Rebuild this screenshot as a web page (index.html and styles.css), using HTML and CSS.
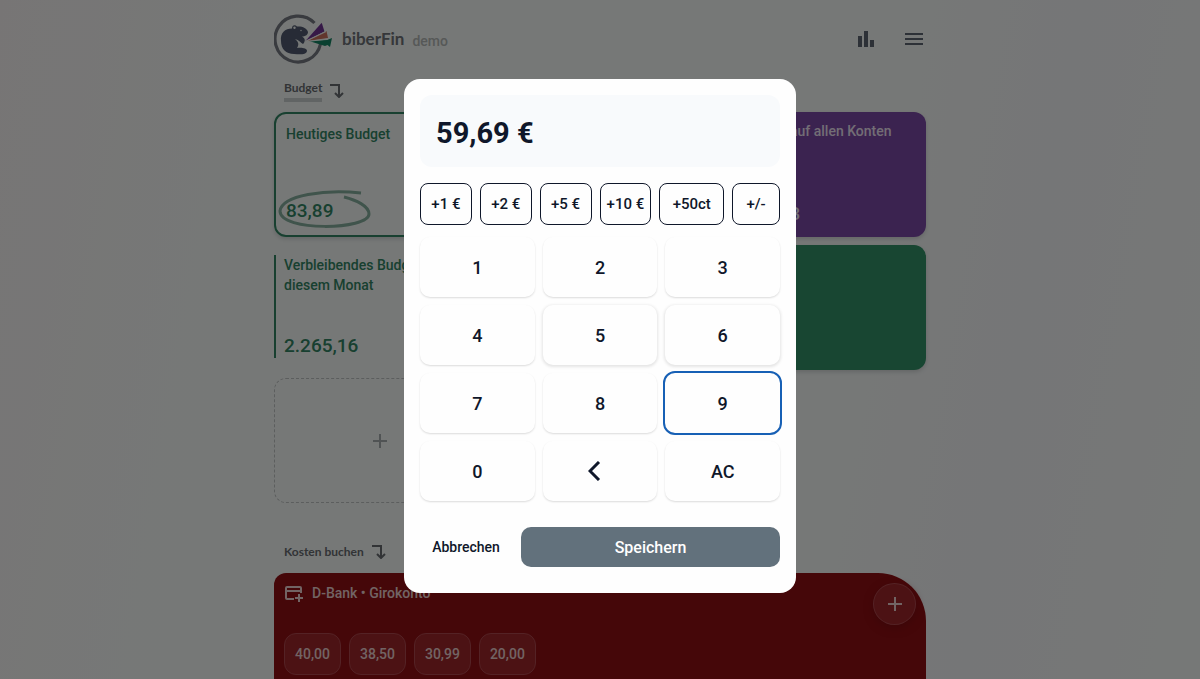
FILE: index.html
```html
<!DOCTYPE html>
<html lang="de">
<head>
<meta charset="utf-8">
<meta name="viewport" content="width=device-width, initial-scale=1">
<title>biberFin demo</title>
<link rel="stylesheet" href="styles.css">
</head>
<body>
<div class="page">
  <header class="topbar">
    <a class="brand" href="#">
      <svg class="brand-logo" viewBox="0 0 60 52" aria-hidden="true">
        <path d="M40.5 10A23 23 0 1 0 46.5 31" fill="none" stroke="#72767e" stroke-width="3.2"/>
        <path d="M7 28C6 20 11 15.500 18 15.500C18 12 21 11.500 23 13.500C28 13 33 15 34 19C34 22 31 23.500 28 23.500C31 25 32 28 29 31C27 30 25 27 21 26C25 29 25 32 23 35C28 34.500 33 35 33 38C32 42 26 41.500 20 41C12 41 7 36 7 28Z" fill="#4e576c"/>
        <circle cx="20.500" cy="14.800" r="1.200" fill="#edf1ef"/>
        <circle cx="27" cy="17.500" r="0.700" fill="#edf1ef"/>
        <path d="M31 28.500L47.700 9.700L50.500 18.500Z" fill="#6c338f"/>
        <path d="M33 28L52.500 18L54 25Z" fill="#c56d5b"/>
        <path d="M35 28L53 27L58 25L56 34L53.500 32L51 33Z" fill="#148060"/>
        <path d="M31 28.500L52 18.500M33 28.500L54 26" fill="none" stroke="#edf1ef" stroke-width="1.200"/>
      </svg>
      <span class="brand-name">biberFin</span>
      <span class="brand-tag">demo</span>
    </a>
    <nav class="tools" aria-label="Menü">
      <button class="icon-button" aria-label="Statistik"><svg width="24" height="24" viewBox="0 0 24 24"><path d="M4 9h4v11H4zM10 4h4v16h-4zM16 13h4v7h-4z"/></svg></button>
      <button class="icon-button" aria-label="Menü öffnen"><svg width="24" height="24" viewBox="0 0 24 24"><path d="M3 6h18v2H3zM3 11h18v2H3zM3 16h18v2H3z"/></svg></button>
    </nav>
  </header>

  <main>
    <h2 class="section-title"><span class="underlined">Budget</span>
      <svg class="turn" viewBox="0 0 14 16" aria-hidden="true"><path d="M0 3H9V14M5 11L9 15L13 11"/></svg></h2>
    <div class="cards">
      <section class="card card-outline">
        <h3 class="card-title">Heutiges Budget</h3>
        <p class="card-value">83,89</p>
        <svg class="scribble" viewBox="0 0 94 40" aria-hidden="true"><path d="M83 4C48 0 4 6 2 22C2 43 91 41 91 25C91 17 78 11 66 8"/></svg>
      </section>
      <section class="card card-purple">
        <h3 class="card-title">Guthaben auf allen Konten</h3>
        <p class="card-value">4.250,13</p>
      </section>
      <section class="card card-side">
        <h3 class="card-title">Verbleibendes Budget<br>diesem Monat</h3>
        <p class="card-value">2.265,16</p>
      </section>
      <section class="card card-green"></section>
      <button class="card card-add" aria-label="Karte hinzufügen"><svg width="14" height="14" viewBox="0 0 14 14"><path d="M7 0V14M0 7H14"/></svg></button>
    </div>

    <h2 class="section-title section-costs"><span>Kosten buchen</span>
      <svg class="turn" viewBox="0 0 14 16" aria-hidden="true"><path d="M0 3H9V14M5 11L9 15L13 11"/></svg></h2>
    <section class="account">
      <div class="account-head">
        <svg width="20" height="18" viewBox="0 0 20 18" aria-hidden="true"><path d="M10 14H3Q2 14 2 13V3Q2 2 3 2H16Q17 2 17 3V8M2 6H17M15 9V17M11 13H19"/></svg>
        <h3>D-Bank • Girokonto</h3>
        <button class="round-add" aria-label="Betrag buchen"><svg width="14" height="14" viewBox="0 0 14 14"><path d="M7 0V14M0 7H14"/></svg></button>
      </div>
      <div class="amounts">
        <button>40,00</button><button>38,50</button><button>30,99</button><button>20,00</button>
      </div>
    </section>
  </main>
</div>

<div class="overlay">
  <div class="dialog" role="dialog" aria-modal="true" aria-label="Betrag eingeben">
    <output class="display">59,69 €</output>
    <div class="quick">
      <button>+1 €</button><button>+2 €</button><button>+5 €</button><button>+10 €</button><button>+50ct</button><button>+/-</button>
    </div>
    <div class="keys">
      <button>1</button><button>2</button><button>3</button>
      <button>4</button><button class="raised">5</button><button class="raised">6</button>
      <button>7</button><button>8</button><button class="focused">9</button>
      <button>0</button>
      <button aria-label="Löschen"><svg class="back" viewBox="0 0 24 20"><path d="M11 1L2 10L11 19"/></svg></button>
      <button>AC</button>
    </div>
    <div class="actions">
      <button class="cancel">Abbrechen</button>
      <button class="save">Speichern</button>
    </div>
  </div>
</div>
</body>
</html>
```
FILE: styles.css
```css
* { box-sizing: border-box; }

body {
  margin: 0;
  background: linear-gradient(100deg, #eeebeb 0%, #edf1ef 22%, #edf1ef 68%, #ebecef 82%, #edf1ef 100%);
  color: #0f172a;
  font-family: Roboto, "Noto Sans", sans-serif;
  font-size: 14px;
  font-weight: 500;
}

h2, h3, p { margin: 0; font-weight: 500; }

button {
  margin: 0;
  padding: 0;
  border: 0;
  background: none;
  color: inherit;
  font: inherit;
}

svg { display: block; }

.page {
  display: flex;
  flex-direction: column;
  max-width: 668px;
  min-height: 100vh;
  margin: 0 auto;
  padding: 0 8px;
}

main {
  display: flex;
  flex: 1;
  flex-direction: column;
}

.topbar {
  display: flex;
  align-items: center;
  justify-content: space-between;
  height: 78px;
}

.brand {
  display: flex;
  align-items: center;
  gap: 8px;
  color: #6a6e74;
  text-decoration: none;
}

.brand-logo { width: 60px; height: 52px; }

.brand-name {
  font-family: Lato, sans-serif;
  font-size: 17px;
  font-weight: 700;
  line-height: 32px;
}

.brand-tag { padding-top: 4px; color: #acb0b0; }

.tools { display: flex; gap: 24px; }
.icon-button { fill: #5a626e; }

.section-title {
  display: flex;
  align-items: center;
  gap: 8px;
  height: 34px;
  padding: 0 10px 10px;
  color: #64686d;
  font-family: Lato, sans-serif;
  font-size: 12px;
  font-weight: 700;
}

.underlined { border-bottom: 4px solid #c2c8c8; line-height: 20px; }

.turn {
  width: 14px;
  height: 16px;
  fill: none;
  stroke: #64686d;
  stroke-width: 2;
}

.cards {
  display: grid;
  grid-template-columns: repeat(3, 1fr);
  grid-auto-rows: 125px;
  gap: 8px;
}

.card {
  position: relative;
  display: flex;
  flex-direction: column;
  justify-content: space-between;
  padding: 10px;
  border-radius: 12px;
}

.card-title { font-size: 14px; line-height: 20px; }
.card-value { font-size: 19px; line-height: 28px; }

.card-outline {
  border: 2px solid #308060;
  color: #308060;
  box-shadow: 0 2px 4px #c8cccc;
}

.scribble {
  position: absolute;
  left: 2px;
  bottom: 6px;
  width: 94px;
  height: 40px;
  fill: none;
  stroke: #80a898;
  stroke-width: 3;
}

.card-purple {
  grid-column: 3;
  padding: 9px 12px;
  background: #7646a0;
  color: #e4dcea;
  box-shadow: 0 2px 4px #c8cccc;
}

.card-side {
  margin: 10px 0 12px;
  padding: 0 8px;
  border-left: 2px solid #308060;
  border-radius: 0;
  color: #308060;
}

.card-side .card-value { line-height: 24px; }

.card-green {
  grid-column: 3;
  background: #308c64;
  box-shadow: 0 2px 4px #c8cccc;
}

.card-add {
  align-items: center;
  justify-content: center;
  border: 1px dashed #b8bcbc;
  stroke: #a0a6a8;
  stroke-width: 2;
}

.section-costs { height: 42px; margin-top: 28px; padding-bottom: 2px; }

.account {
  flex: 1;
  padding: 10px 10px 0;
  border-radius: 12px 48px 0 0;
  background: #8a0e12;
  color: #e4c8c8;
}

.account-head {
  display: flex;
  align-items: flex-start;
  gap: 8px;
  min-height: 50px;
}

.account-head > svg {
  margin-top: 2px;
  fill: none;
  stroke: #e4c8c8;
  stroke-width: 2;
}

.account-head h3 { flex: 1; font-size: 14px; line-height: 20px; }

.round-add {
  display: grid;
  place-items: center;
  width: 43px;
  height: 42px;
  border: 1px solid #a8444a;
  border-radius: 50%;
  background: #982428;
  stroke: #e4c8c8;
  stroke-width: 2;
  box-shadow: 0 3px 8px #780c10;
}

.amounts { display: flex; gap: 8px; }

.amounts button {
  height: 42px;
  padding: 0 10px;
  border: 1px solid #a8444a;
  border-radius: 12px;
  background: #982428;
}

.overlay {
  position: fixed;
  inset: 0;
  display: grid;
  place-items: center;
  padding-bottom: 7px;
  background: rgb(0 0 0 / 50%);
}

.dialog {
  width: 392px;
  max-width: 100%;
  padding: 16px 16px 26px;
  border-radius: 16px;
  background: #fefefe;
}

.display {
  display: block;
  padding: 18px 16px 14px;
  border-radius: 12px;
  background: #f8fafc;
  font-size: 29px;
  font-weight: 700;
  line-height: 40px;
}

.quick {
  display: grid;
  grid-template-columns: 52fr 52fr 52fr 52fr 65fr 48fr;
  gap: 8px;
  margin: 16px 0 12px;
}

.quick button {
  height: 42px;
  border: 1px solid #0f172a;
  border-radius: 8px;
  font-size: 15px;
  white-space: nowrap;
}

.keys {
  display: grid;
  grid-template-columns: repeat(3, 1fr);
  gap: 8px;
}

.keys button {
  display: grid;
  place-items: center;
  height: 60px;
  border-radius: 10px;
  font-size: 18px;
  box-shadow: 0 1px 2px rgb(0 0 0 / 14%);
}

.keys .raised { box-shadow: 0 1px 3px 1px rgb(0 0 0 / 10%); }
.keys .focused { outline: 2px solid #1760b5; }

.back {
  width: 24px;
  height: 20px;
  fill: none;
  stroke: #0f172a;
  stroke-width: 3;
}

.actions {
  display: grid;
  grid-template-columns: 92px 1fr;
  gap: 9px;
  margin-top: 26px;
}

.save {
  height: 40px;
  border-radius: 10px;
  background: #62717c;
  color: #fff;
  font-size: 16px;
}
```
